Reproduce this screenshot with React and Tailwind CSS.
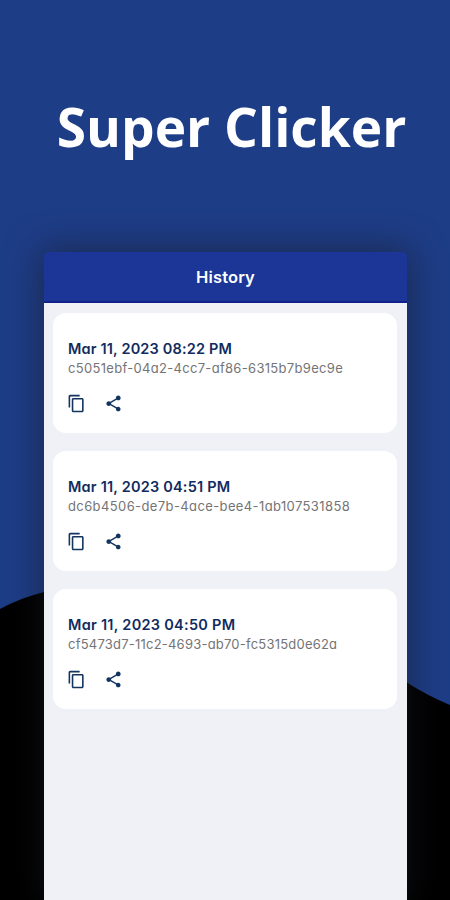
import { MdContentCopy, MdShare } from "react-icons/md";

const entries = [
  {
    date: "Mar 11, 2023 08:22 PM",
    dateClass: "tracking-[0.17px]",
    id: "c5051ebf-04a2-4cc7-af86-6315b7b9ec9e",
    idClass: "tracking-[0.31px]",
  },
  {
    date: "Mar 11, 2023 04:51 PM",
    dateClass: "tracking-[0.2px]",
    id: "dc6b4506-de7b-4ace-bee4-1ab107531858",
    idClass: "tracking-[0.39px]",
  },
  {
    date: "Mar 11, 2023 04:50 PM",
    dateClass: "tracking-[0.28px]",
    id: "cf5473d7-11c2-4693-ab70-fc5315d0e62a",
    idClass: "tracking-[0.22px]",
  },
];

function Entry({ entry }) {
  return (
    <article className="h-[120px] whitespace-nowrap rounded-[13px] bg-white pl-[15px] pt-[26px]">
      <h2 className={`h-5 text-[14.5px] font-semibold leading-5 text-[#112b5e] ${entry.dateClass}`}>{entry.date}</h2>
      <p className={`h-[18px] text-[13px] leading-[19px] text-[#747476] ${entry.idClass}`}>{entry.id}</p>
      <div className="mt-4 flex h-5 items-center gap-[18px] text-[#12345f]">
        <MdContentCopy className="-ml-px size-[19px]" />
        <MdShare className="size-[19px]" />
      </div>
    </article>
  );
}

export default function App() {
  return (
    <main className="relative h-[900px] w-[450px] overflow-hidden bg-[#1e3d87]">
      <svg className="absolute inset-0" width="450" height="900" viewBox="0 0 450 900">
        <path d="M0 609 Q20 598 44 592 C160 565 300 620 406 682 Q428 696 450 705 V900 H0 Z" fill="#000" />
      </svg>
      <div className="relative flex h-full flex-col items-center">
        <h1 className="mt-[91px] h-[161px] whitespace-nowrap pl-[13px] font-['Open_Sans',sans-serif] text-[53.2px] font-bold leading-[72px] text-white">
          Super Clicker
        </h1>
        <section className="ml-px flex w-[363px] grow flex-col rounded-t-[5px] font-[Inter,sans-serif] shadow-[0_0_34px_3px_rgba(24,26,34,0.55)] [font-feature-settings:'cv11']">
          <header className="flex h-[51px] items-center justify-center rounded-t-[5px] border-b-2 border-[#10218b] bg-[#1b3697] pt-px text-[16.5px] font-semibold tracking-[0.15px] text-white">
            History
          </header>
          <div className="flex grow flex-col gap-[18px] bg-[#eff1f6] pl-[9px] pr-[10px] pt-[10px]">
            {entries.map((entry) => (
              <Entry key={entry.id} entry={entry} />
            ))}
          </div>
        </section>
      </div>
    </main>
  );
}
